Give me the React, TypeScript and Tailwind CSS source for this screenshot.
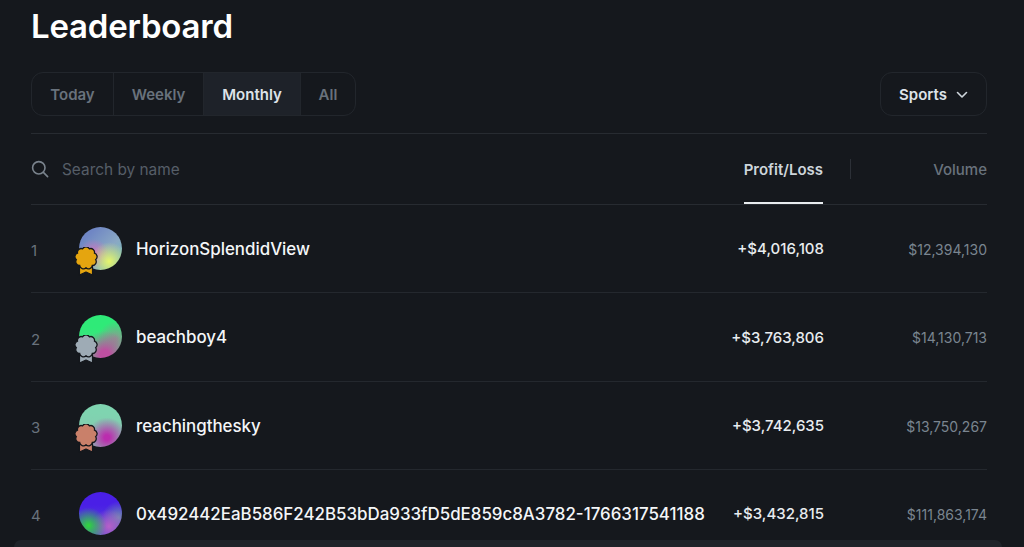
const rows = [
  {
    rank: 1,
    name: "HorizonSplendidView",
    pnl: "+$4,016,108",
    volume: "$12,394,130",
    avatar:
      "bg-[radial-gradient(circle_at_70%_80%,#e6f56c_0%,#c8e88a00_42%),radial-gradient(circle_at_35%_62%,#d070c0_0%,#d070c000_38%),linear-gradient(135deg,#6f86c4_20%,#8aa8c4_60%,#6fc4b8_100%)]",
    badge: "#e5a50f",
  },
  {
    rank: 2,
    name: "beachboy4",
    pnl: "+$3,763,806",
    volume: "$14,130,713",
    avatar:
      "bg-[radial-gradient(circle_at_60%_92%,#bd4fa0_0%,#bd4fa0_10%,#bd4fa000_50%),radial-gradient(circle_at_85%_55%,#8a9a90_0%,#8a9a9000_40%),linear-gradient(180deg,#2fea78_30%,#55d88a_100%)]",
    badge: "#9eabb5",
  },
  {
    rank: 3,
    name: "reachingthesky",
    pnl: "+$3,742,635",
    volume: "$13,750,267",
    avatar:
      "bg-[radial-gradient(circle_at_65%_78%,#bb2dae_0%,#bb2dae_6%,#bb2dae00_46%),linear-gradient(180deg,#7fd4b0_20%,#88c4b0_100%)]",
    badge: "#c9806a",
  },
  {
    rank: 4,
    name: "0x492442EaB586F242B53bDa933fD5dE859c8A3782-1766317541188",
    pnl: "+$3,432,815",
    volume: "$111,863,174",
    avatar:
      "bg-[radial-gradient(circle_at_22%_78%,#2fd83a_0%,#2fd83a00_38%),radial-gradient(circle_at_70%_80%,#b760c8_0%,#b760c800_38%),radial-gradient(circle_at_92%_60%,#6f8ab0_0%,#6f8ab000_35%),linear-gradient(180deg,#4a1fe6_30%,#5a50d0_100%)]",
  },
];

// scalloped edge of the medal, nine lobes
const medalPath =
  [0, 1, 2, 3, 4, 5, 6, 7, 8, 9]
    .map((i) => {
      const a = ((i * 40 - 110) * Math.PI) / 180;
      const x = (12 + 9.8 * Math.cos(a)).toFixed(2);
      const y = (11 + 9.8 * Math.sin(a)).toFixed(2);
      return i === 0 ? `M${x} ${y}` : `A3.8 3.8 0 0 1 ${x} ${y}`;
    })
    .join(" ") + "Z";

function Medal({ color }: { color: string }) {
  return (
    <svg viewBox="0 0 24 30" className="absolute left-[-5px] top-[20px] h-[30px] w-[24px]">
      <path d="M5.5 18 L5.5 28 L12 25 L18.5 28 L18.5 18 Z" fill={color} stroke="#14171c" strokeWidth="1.2" strokeLinejoin="round" />
      <path d={medalPath} fill={color} stroke="#14171c" strokeWidth="1.3" />
    </svg>
  );
}

export default function App() {
  return (
    <div className="relative h-[547px] w-[1024px] overflow-hidden bg-[#15181d] pl-[31px] pr-[37px] font-['Inter',sans-serif] text-white">
      <h1 className="h-[72px] pt-[5px] text-[33px] leading-[42px] font-semibold tracking-[-0.2px]">Leaderboard</h1>

      {/* Filters */}
      <div className="flex h-[62px] items-start justify-between border-b border-[#272b31]">
        <div className="flex h-[44px] overflow-hidden rounded-[12px] border border-[#22262c] text-[15px] font-semibold text-[#69727c]">
          <div className="flex w-[82px] items-center justify-center border-r border-[#22262c] pt-[2px]">Today</div>
          <div className="flex w-[90px] items-center justify-center border-r border-[#22262c] pt-[2px]">Weekly</div>
          <div className="flex w-[97px] items-center justify-center border-r border-[#22262c] bg-[#1e2229] pt-[2px] text-[#dde3e8]">Monthly</div>
          <div className="flex w-[54px] items-center justify-center pt-[2px]">All</div>
        </div>
        <div className="flex h-[44px] w-[107px] items-center justify-center gap-[9px] rounded-[12px] border border-[#22262c] pt-[2px] text-[15px] font-semibold text-[#dde3e8]">
          Sports
          <svg viewBox="0 0 12 8" className="h-[8px] w-[12px]" fill="none" stroke="#cfd6dc" strokeWidth="1.6" strokeLinecap="round" strokeLinejoin="round">
            <path d="M1.5 1.5 L6 6 L10.5 1.5" />
          </svg>
        </div>
      </div>

      {/* Search and sort */}
      <div className="flex h-[71px] items-center justify-between border-b border-[#272b31]">
        <div className="flex items-center gap-[13px] text-[15.4px] text-[#565e68]">
          <svg viewBox="0 0 18 18" className="h-[18px] w-[18px]" fill="none" stroke="#7a838d" strokeWidth="1.6" strokeLinecap="round">
            <circle cx="7.8" cy="7.8" r="6.2" />
            <path d="M12.4 12.4 L16.6 16.6" />
          </svg>
          <span className="pt-[2px]">Search by name</span>
        </div>
        <div className="flex h-full items-center text-[15px] font-semibold">
          <div className="flex h-full items-center border-b-2 border-[#e8ecef] pt-[5px] text-[#cdd5db]">Profit/Loss</div>
          <div className="ml-[27px] h-[20px] w-px bg-[#2c3037]" />
          <div className="w-[136px] pt-[2px] text-right font-medium text-[#69727c]">Volume</div>
        </div>
      </div>

      {/* Rows */}
      {rows.map((r) => (
        <div key={r.rank} className="flex h-[88.3px] shrink-0 items-center border-b border-[#24282e]">
          <div className="w-[48px] pt-[6px] text-[15px] text-[#69727c]">{r.rank}</div>
          <div className={`relative h-[43px] w-[43px] shrink-0 rounded-full ${r.avatar}`}>
            {r.badge && <Medal color={r.badge} />}
          </div>
          <div className="ml-[14px] flex-1 whitespace-nowrap pt-[2px] text-[16.9px] font-medium text-[#f4f6f8]">{r.name}</div>
          <div className="pt-[2px] text-[15px] font-medium text-[#e8ecef]">{r.pnl}</div>
          <div className="w-[163px] pt-[2px] text-right text-[14px] text-[#7a8590]">{r.volume}</div>
        </div>
      ))}

      {/* Bottom sheet peeking in */}
      <div className="absolute bottom-0 left-[14px] right-[22px] h-[7px] rounded-t-[12px] bg-[#1f2329]" />
    </div>
  );
}
